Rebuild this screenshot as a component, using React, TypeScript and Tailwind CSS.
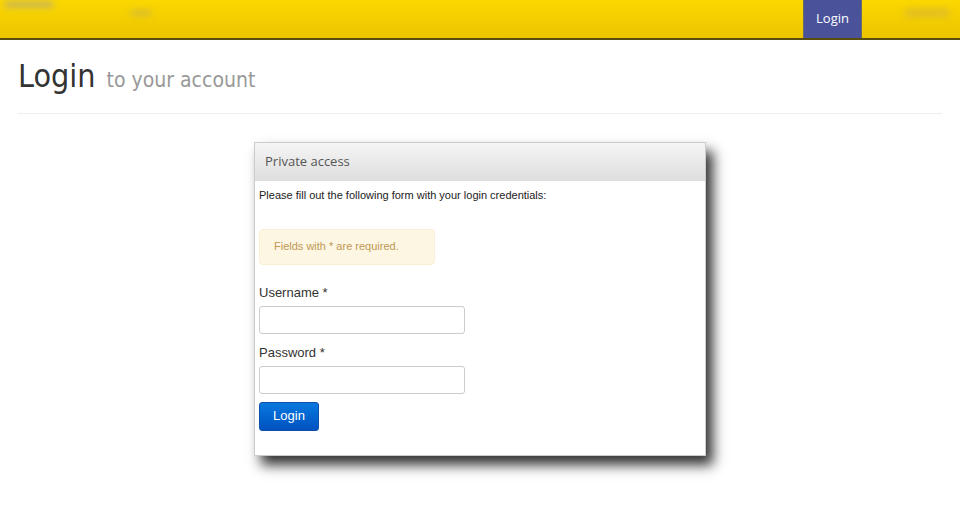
export default function App() {
  return (
    <div className="min-h-[516px] w-[960px] bg-white font-['Open_Sans',sans-serif]">
      <div className="relative flex h-[40px] border-b-2 border-[#5a4d10] bg-gradient-to-b from-[#fcd800] to-[#ecc400]">
        <div className="absolute left-[4px] top-[1px] h-[7px] w-[50px] rounded-full bg-[#cdb850] blur-[3px]" />
        <div className="absolute left-[130px] top-[10px] h-[6px] w-[22px] rounded-full bg-[#d8bd30] blur-[3px]" />
        <div className="absolute right-[10px] top-[8px] h-[10px] w-[46px] rounded-full bg-[#e4c020] blur-[3px]" />
        <div className="flex-1" />
        <div className="mr-[98px] flex w-[59px] items-center justify-center border-x border-[#6a6a6a] bg-[#4a529a] text-[13px] text-white">
          Login
        </div>
      </div>
      <div className="mx-[18px]">
        <div className="flex items-baseline pt-[12px] pb-[13px]">
          <span className="font-['DejaVu_Sans_Condensed',sans-serif] text-[32px] font-medium text-[#333]">Login</span>
          <span className="ml-[11px] font-['DejaVu_Sans_Condensed',sans-serif] text-[21px] text-[#999]">to your account</span>
        </div>
        <div className="h-px bg-[#eeeeee]" />
      </div>
      <div className="mt-[28px] flex justify-center">
        <div className="w-[452px] border border-[#ccc] bg-white shadow-[7px_9px_12px_rgba(0,0,0,0.8)]">
          <div className="flex h-[38px] items-center bg-gradient-to-b from-[#f5f5f5] to-[#dedede] px-[10px] text-[13px] text-[#555]">
            Private access
          </div>
          <div className="px-[4px] pt-[6px] pb-[24px] font-['Liberation_Sans',sans-serif]">
            <p className="text-[11px] text-[#222]">Please fill out the following form with your login credentials:</p>
            <div className="mt-[25px] flex h-[36px] w-[176px] items-center rounded-[4px] border border-[#fbeed5] bg-[#fcf6e3] px-[14px] text-[11px] text-[#c09853]">
              Fields with * are required.
            </div>
            <div className="mt-[18px] text-[13px] text-[#333]">Username *</div>
            <input className="mt-[4px] block h-[28px] w-[206px] rounded-[3px] border border-[#ccc] bg-white" />
            <div className="mt-[9px] text-[13px] text-[#333]">Password *</div>
            <input type="password" className="mt-[3px] block h-[28px] w-[206px] rounded-[3px] border border-[#ccc] bg-white" />
            <button className="mt-[8px] flex h-[29px] w-[60px] items-center justify-center rounded-[3px] border border-[#0a4fa8] bg-gradient-to-b from-[#0a78e0] to-[#0052c0] text-[13px] text-white">
              Login
            </button>
          </div>
        </div>
      </div>
    </div>
  );
}
